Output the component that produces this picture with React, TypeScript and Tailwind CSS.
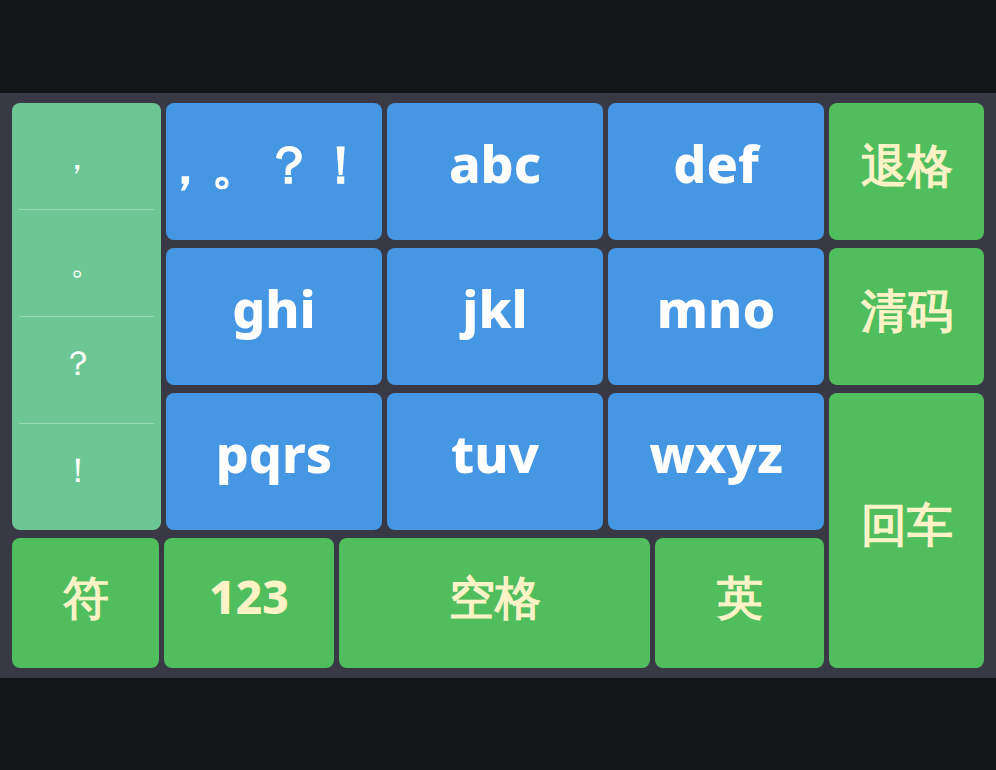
import React from 'react';

const letterKeys = ['abc', 'def', 'ghi', 'jkl', 'mno', 'pqrs', 'tuv', 'wxyz'];

// 每个符号的内边距微调，和参考图对齐
const symbols = [
  { ch: '，', pad: 'pr-[20px]' },
  { ch: '。', pad: 'pb-1' },
  { ch: '？', pad: 'pr-[18px] pb-4' },
  { ch: '！', pad: 'pr-[18px] pb-4' },
];

function LetterKey({ label, className = '' }: { label: string; className?: string }) {
  return (
    <button
      className={`flex items-center justify-center rounded-lg bg-[#4596e3] pb-4 text-[52px] font-extrabold leading-none text-white ${className}`}
    >
      {label}
    </button>
  );
}

function FnKey({ label, className = '' }: { label: string; className?: string }) {
  return (
    <button
      className={`flex items-center justify-center rounded-lg bg-[#50be5c] pb-3.5 text-[46px] font-extrabold leading-none text-[#fef3c7] ${className}`}
    >
      {label}
    </button>
  );
}

export default function App() {
  return (
    <div className="flex h-screen w-full items-center bg-[#141519] font-sans">
      <div className="flex w-full gap-[5px] bg-[#393946] px-3 py-2.5">
        {/* Main area */}
        <div className="flex w-[812px] flex-col gap-2">
          <div className="flex h-[427px] gap-[5px]">
            {/* Symbol column */}
            <div className="grid w-[149px] grid-rows-4 rounded-lg bg-[#6dc794] px-[7px]">
              {symbols.map((s, i) => (
                <div
                  key={s.ch}
                  className={`flex items-center justify-center text-[34px] leading-none text-white ${s.pad} ${
                    i > 0 ? 'border-t border-white/30' : ''
                  }`}
                >
                  {s.ch}
                </div>
              ))}
            </div>
            {/* Letter grid */}
            <div className="grid flex-1 grid-cols-3 grid-rows-3 gap-x-[5px] gap-y-2">
              <LetterKey label="，。？！" className="pr-[22px]" />
              {letterKeys.map((k) => (
                <LetterKey key={k} label={k} />
              ))}
            </div>
          </div>
          {/* Bottom row */}
          <div className="flex h-[130px] gap-[5px]">
            <FnKey label="符" className="w-[147px]" />
            <FnKey label="123" className="w-[170px]" />
            <FnKey label="空格" className="flex-1" />
            <FnKey label="英" className="w-[169px]" />
          </div>
        </div>
        {/* Right column */}
        <div className="flex flex-1 flex-col gap-2">
          <FnKey label="退格" className="h-[137px]" />
          <FnKey label="清码" className="h-[137px]" />
          <FnKey label="回车" className="flex-1" />
        </div>
      </div>
    </div>
  );
}
